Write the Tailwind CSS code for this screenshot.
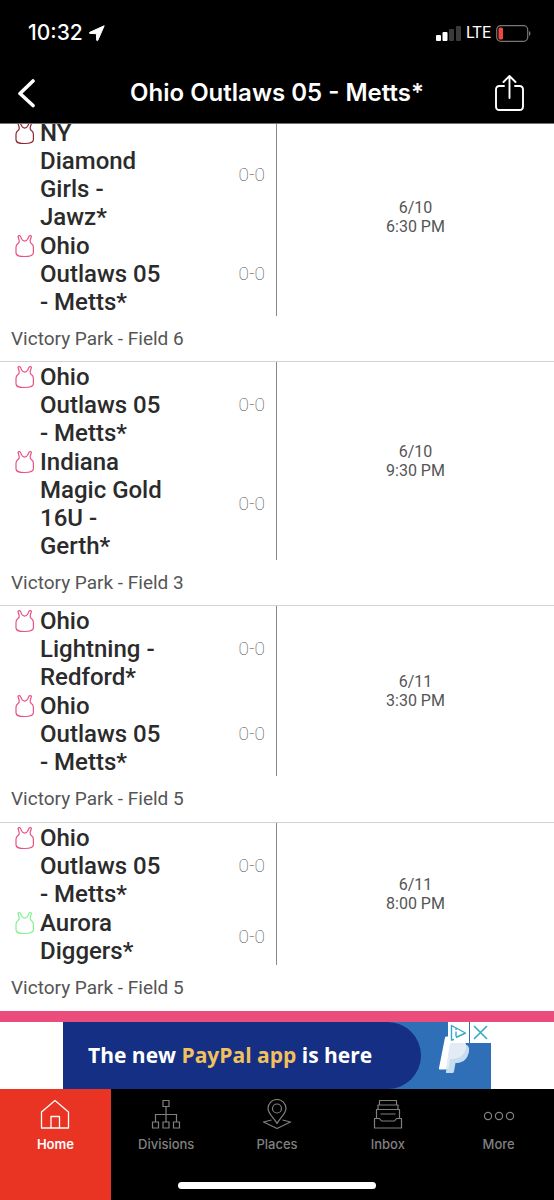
<!DOCTYPE html>
<html lang="en">
<head>
<meta charset="utf-8">
<meta name="viewport" content="width=device-width, initial-scale=1">
<title>Ohio Outlaws 05 - Metts*</title>
<script src="https://cdn.jsdelivr.net/npm/@tailwindcss/browser@4"></script>
</head>
<body class="flex h-screen flex-col overflow-hidden bg-white font-['Roboto',sans-serif] text-[#2b2b2b]">
<svg class="hidden" aria-hidden="true">
  <symbol id="jersey" viewBox="0 0 20 26"><path d="M4 4.500c.2-1 2-1.100 2.400-.2l1.400 3c.7 1.300 1.700 1.800 2.900 1.800s2.200-.5 2.900-1.800l1.400-3c.4-.9 2.200-.8 2.400.2l-1.200 4c-.2 1.400 0 2.200 1.200 3.100 1.600 1.100 2 2.200 2 3.700v5.500c0 2.500-1.700 3.700-8.700 3.700S2 23.300 2 20.800v-5.500c0-1.500.4-2.600 2-3.700 1.200-.9 1.400-1.700 1.200-3.100z" fill="none" stroke="currentColor" stroke-width="1.200"/></symbol>
</svg>

<header class="z-10 shrink-0 border-b border-neutral-500 bg-black font-['Inter',sans-serif] text-white">
  <div class="flex h-[62px] items-center justify-between pt-1 pr-[23px] pl-[28px]">
    <div class="flex items-center gap-[5px]">
      <time class="text-[21px] font-medium">10:32</time>
      <svg class="h-[18px] w-[18px]" viewBox="0 0 18 18" fill="currentColor" stroke="currentColor" stroke-linejoin="round" aria-label="Location in use"><path d="M16.200 1.800 1.800 8.300c-.7.400-.6 1 .2 1.100l6.400.3.300 6.400c.1.800.7.900 1.100.2z"/></svg>
    </div>
    <div class="flex items-center gap-[5px]">
      <svg class="h-4 w-[25px]" viewBox="0 0 25 16" aria-label="Signal"><g fill="#fff"><rect y="10" width="5" height="6" rx="1"/><rect x="6.500" y="7" width="5" height="9" rx="1"/></g><g fill="#3a3a3a"><rect x="13" y="4" width="5" height="12" rx="1"/><rect x="20" y="1" width="5" height="15" rx="1"/></g></svg>
      <span class="font-['Roboto',sans-serif] text-base">LTE</span>
      <svg class="h-[17px] w-[35px]" viewBox="0 0 35 17" aria-label="Battery low"><rect x=".7" y=".7" width="31" height="15.600" rx="4" fill="none" stroke="#777" stroke-width="1.200"/><rect x="2.500" y="2.500" width="4.500" height="12" rx="1.500" fill="#f0483e"/><path d="M33 6v5c2-.7 2-4.300 0-5z" fill="#777"/></svg>
    </div>
  </div>
  <div class="flex h-[61px] items-center justify-between">
    <button type="button" aria-label="Back" class="w-[59px] pl-[17px]"><svg class="h-[30px] w-[19px]" viewBox="0 0 19 30" fill="none" stroke="currentColor" stroke-width="3.600" stroke-linecap="round" stroke-linejoin="round"><path d="M16 3 3 15.500 16 27.500"/></svg></button>
    <h1 class="text-2xl font-semibold">Ohio Outlaws 05 - Metts*</h1>
    <button type="button" aria-label="Share" class="w-[59px]"><svg class="h-9 w-[29px]" viewBox="0 0 29 36" fill="none" stroke="currentColor" stroke-width="1.900" stroke-linecap="round" stroke-linejoin="round"><path d="M9 11H4.500Q1 11 1 14.500v17Q1 35 4.500 35h20Q28 35 28 31.500v-17Q28 11 24.500 11H20M14.500 23V1M8.500 7l6-6 6 6"/></svg></button>
  </div>
</header>

<main class="flex min-h-0 flex-1 flex-col justify-end overflow-hidden">
  <ul class="shrink-0">
    <li class="border-t border-[#d2d2d2]">
      <div class="grid grid-cols-2">
        <div class="border-r border-[#888] pr-[11px] pl-[14px]">
          <div class="flex items-center justify-between pt-px"><div class="flex gap-[6px] self-start"><svg class="h-[26px] w-5 shrink-0 text-[#8f2637]"><use href="#jersey"/></svg><h2 class="w-[125px] text-2xl/[28px] font-medium">NY Diamond Girls - Jawz*</h2></div><span class="text-[19px] font-thin text-[#444]">0-0</span></div>
          <div class="flex items-center justify-between pt-px"><div class="flex gap-[6px] self-start"><svg class="h-[26px] w-5 shrink-0 text-[#e75484]"><use href="#jersey"/></svg><h2 class="w-[125px] text-2xl/[28px] font-medium">Ohio Outlaws 05 - Metts*</h2></div><span class="text-[19px] font-thin text-[#444]">0-0</span></div>
        </div>
        <time class="self-center text-center text-base/[19px] text-[#555]">6/10<br>6:30 PM</time>
      </div>
      <p class="h-[45px] pl-[11px] text-[19px]/[45px] text-[#555]">Victory Park - Field 6</p>
    </li>
    <li class="border-t border-[#d2d2d2]">
      <div class="grid grid-cols-2">
        <div class="border-r border-[#888] pr-[11px] pl-[14px]">
          <div class="flex items-center justify-between pt-px"><div class="flex gap-[6px] self-start"><svg class="h-[26px] w-5 shrink-0 text-[#e75484]"><use href="#jersey"/></svg><h2 class="w-[125px] text-2xl/[28px] font-medium">Ohio Outlaws 05 - Metts*</h2></div><span class="text-[19px] font-thin text-[#444]">0-0</span></div>
          <div class="flex items-center justify-between pt-px"><div class="flex gap-[6px] self-start"><svg class="h-[26px] w-5 shrink-0 text-[#e75484]"><use href="#jersey"/></svg><h2 class="w-[125px] text-2xl/[28px] font-medium">Indiana Magic Gold 16U - Gerth*</h2></div><span class="text-[19px] font-thin text-[#444]">0-0</span></div>
        </div>
        <time class="self-center text-center text-base/[19px] text-[#555]">6/10<br>9:30 PM</time>
      </div>
      <p class="h-[45px] pl-[11px] text-[19px]/[45px] text-[#555]">Victory Park - Field 3</p>
    </li>
    <li class="border-t border-[#d2d2d2]">
      <div class="grid grid-cols-2">
        <div class="border-r border-[#888] pr-[11px] pl-[14px]">
          <div class="flex items-center justify-between pt-px"><div class="flex gap-[6px] self-start"><svg class="h-[26px] w-5 shrink-0 text-[#e75484]"><use href="#jersey"/></svg><h2 class="w-[125px] text-2xl/[28px] font-medium">Ohio Lightning - Redford*</h2></div><span class="text-[19px] font-thin text-[#444]">0-0</span></div>
          <div class="flex items-center justify-between pt-px"><div class="flex gap-[6px] self-start"><svg class="h-[26px] w-5 shrink-0 text-[#e75484]"><use href="#jersey"/></svg><h2 class="w-[125px] text-2xl/[28px] font-medium">Ohio Outlaws 05 - Metts*</h2></div><span class="text-[19px] font-thin text-[#444]">0-0</span></div>
        </div>
        <time class="self-center text-center text-base/[19px] text-[#555]">6/11<br>3:30 PM</time>
      </div>
      <p class="h-[46px] pl-[11px] text-[19px]/[46px] text-[#555]">Victory Park - Field 5</p>
    </li>
    <li class="border-t border-[#d2d2d2]">
      <div class="grid grid-cols-2">
        <div class="border-r border-[#888] pr-[11px] pl-[14px]">
          <div class="flex items-center justify-between pt-px"><div class="flex gap-[6px] self-start"><svg class="h-[26px] w-5 shrink-0 text-[#e75484]"><use href="#jersey"/></svg><h2 class="w-[125px] text-2xl/[28px] font-medium">Ohio Outlaws 05 - Metts*</h2></div><span class="text-[19px] font-thin text-[#444]">0-0</span></div>
          <div class="flex items-center justify-between pt-px"><div class="flex gap-[6px] self-start"><svg class="h-[26px] w-5 shrink-0 text-[#86f092]"><use href="#jersey"/></svg><h2 class="w-[125px] text-2xl/[28px] font-medium">Aurora Diggers*</h2></div><span class="text-[19px] font-thin text-[#444]">0-0</span></div>
        </div>
        <time class="self-center text-center text-base/[19px] text-[#555]">6/11<br>8:00 PM</time>
      </div>
      <p class="h-[46px] pl-[11px] text-[19px]/[46px] text-[#555]">Victory Park - Field 5</p>
    </li>
  </ul>
</main>

<aside class="shrink-0 border-t-[11px] border-[#ea4c7c] bg-white" aria-label="Advertisement">
  <div class="relative mx-auto flex h-[67px] w-[428px] items-center bg-[#2f6fb8]">
    <a href="#" class="flex h-full w-[358px] items-center rounded-r-full bg-[#142f83] pl-[25px] font-['Open_Sans',sans-serif] text-[21px] font-bold whitespace-nowrap text-white"><span>The new <span class="text-[#f2c05c]">PayPal app</span> is here</span></a>
    <svg class="ml-4 h-10 w-8" viewBox="0 0 32 40" aria-label="PayPal"><path d="M8 1.500q.2-1 1.500-1H20c6 0 9 4 8.500 9C27 18 21 22 14 22h-2l-2 10q-.3 1.500-1.500 1.500H3q-1.500 0-1-1.500z" fill="#fff"/><path d="M13 8q8-4 17.500 1.500c2 2 2 5 1 8-2 7-6.500 9.500-13 9.500l-1.500 8.500q-.3 1.500-1.500 1.500H10q-1.500 0-1-1.500z" fill="#c6ddef"/><path d="M13 8q8-4 16 0c1 10-6 15-14.500 15H13l-1.500 10H9z" fill="#e3ebf4"/></svg>
    <div class="absolute top-0 right-0 flex gap-px">
      <button type="button" aria-label="Ad choices" class="bg-white"><svg class="h-[21px] w-[21px]" viewBox="0 0 21 21" fill="none" stroke="#35a9c6" stroke-width="1.400" stroke-linejoin="round"><path d="M6 17.500 3.500 18V3.500L17.500 11 8 15.500M8 9.500v5M8 6.500v1.500"/></svg></button>
      <button type="button" aria-label="Close ad" class="bg-white"><svg class="h-[21px] w-[21px]" viewBox="0 0 21 21" fill="none" stroke="#35a9c6" stroke-width="1.600"><path d="m4 4 13 13M17 4 4 17"/></svg></button>
    </div>
  </div>
</aside>

<nav class="relative grid h-[111px] shrink-0 grid-cols-5 bg-black font-['Inter',sans-serif] text-[13px]/[18px] font-medium text-[#808080]">
  <a href="#" aria-current="page" class="flex flex-col items-center gap-1 bg-[#e93323] pt-[10px] font-semibold text-white"><svg class="h-8 w-8" viewBox="0 0 32 32" fill="none" stroke="currentColor" stroke-width="1.300" stroke-linejoin="round"><path d="M2.500 13 16 1.500 29.500 13v16h-27zM12 29V17.500h8.500V29"/></svg>Home</a>
  <a href="#" class="flex flex-col items-center gap-1 pt-[10px]"><svg class="h-8 w-8" viewBox="0 0 32 32" fill="none" stroke="currentColor" stroke-width="1.200"><path d="M13 1.500h6v6h-6zM2.500 23h6v6h-6zM13 23h6v6h-6zM23.500 23h6v6h-6zM16 7.500V23M5.500 23v-7.500h21V23"/></svg>Divisions</a>
  <a href="#" class="flex flex-col items-center gap-1 pt-[10px]"><svg class="h-8 w-8" viewBox="0 0 32 32" fill="none" stroke="currentColor" stroke-width="1.200" stroke-linejoin="round"><path d="M16 24.500C13 19 7 14.500 7 9.500a9 9 0 0 1 18 0c0 5-6 9.500-9 15z"/><circle cx="16" cy="9.500" r="4.500"/><path d="m10.500 21-8 2L16 29.500 29.500 23l-8-2"/></svg>Places</a>
  <a href="#" class="flex flex-col items-center gap-1 pt-[10px]"><svg class="h-8 w-8" viewBox="0 0 32 32" fill="none" stroke="currentColor" stroke-width="1.200" stroke-linejoin="round"><path d="M4.500 19.500h-2V29h27v-9.500h-2M4.500 19.500h3l2 2.500h13l2-2.500h3M4.500 19.500v-9h23v9M6 10.500V6h20v4.500M7.500 6V1.500h17V6M8.500 15h15"/></svg>Inbox</a>
  <a href="#" class="flex flex-col items-center gap-1 pt-[10px]"><svg class="h-8 w-8" viewBox="0 0 32 32" fill="none" stroke="currentColor" stroke-width="1.200"><circle cx="5" cy="17" r="3.600"/><circle cx="16" cy="17" r="3.600"/><circle cx="27" cy="17" r="3.600"/></svg>More</a>
  <div class="absolute bottom-[11px] left-1/2 h-[7px] w-[198px] -translate-x-1/2 rounded-full bg-white"></div>
</nav>
</body>
</html>
